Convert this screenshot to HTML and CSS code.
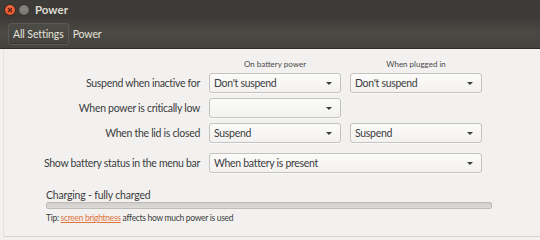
FILE: index.html
```html
<!DOCTYPE html>
<html>
<head>
<meta charset="utf-8">
<link rel="stylesheet" href="styles.css">
</head>
<body>
<div class="window">
  <div class="titlebar">
    <span class="btn close"><svg width="8" height="8" viewBox="0 0 8 8"><path d="M2 2L6 6M6 2L2 6" stroke="#5a1a0a" stroke-width="1.3"/></svg></span>
    <span class="btn min"></span>
    <span class="title">Power</span>
  </div>
  <div class="toolbar">
    <span class="crumb active">All Settings</span>
    <span class="crumb">Power</span>
  </div>
  <div class="content">
    <div class="grid">
      <div></div>
      <div class="colhead">On battery power</div>
      <div class="colhead">When plugged in</div>

      <div class="label">Suspend when inactive for</div>
      <div class="combo"><span>Don't suspend</span><i class="arrow"></i></div>
      <div class="combo"><span>Don't suspend</span><i class="arrow"></i></div>

      <div class="label">When power is critically low</div>
      <div class="combo"><span></span><i class="arrow"></i></div>
      <div></div>

      <div class="label">When the lid is closed</div>
      <div class="combo"><span>Suspend</span><i class="arrow"></i></div>
      <div class="combo"><span>Suspend</span><i class="arrow"></i></div>

      <div class="label spaced">Show battery status in the menu bar</div>
      <div class="combo wide spaced"><span>When battery is present</span><i class="arrow"></i></div>
    </div>
    <div class="status">
      <div class="charging">Charging - fully charged</div>
      <div class="bar"></div>
      <div class="tip">Tip: <a class="link">screen brightness</a> affects how much power is used</div>
    </div>
  </div>
</div>
</body>
</html>
```
FILE: styles.css
```css
html, body { margin: 0; padding: 0; }
body {
  width: 540px; height: 240px; overflow: hidden;
  background: #f2f1f0;
  font-family: Lato, "Open Sans", sans-serif;
}
.window { display: flex; flex-direction: column; height: 240px; }
.titlebar {
  height: 19px; display: flex; align-items: center;
  background: linear-gradient(#3d3c38, #3b3a36);
  padding-left: 5px; gap: 2px;
}
.btn { width: 10px; height: 10px; border-radius: 50%; display: flex; align-items: center; justify-content: center; }
.close { background: radial-gradient(circle at 50% 40%, #f4774f, #e0461c); box-shadow: 0 0 0 1px #3a2a22; }
.min { background: radial-gradient(circle at 50% 40%, #8a8882, #6b6964); margin-left: 2px; box-shadow: 0 0 0 1px #33322f; }
.title { color: #dfdbd2; font-weight: bold; font-size: 11.5px; margin-left: 4px; }
.toolbar {
  height: 29px; display: flex; align-items: center;
  background: linear-gradient(#3f3e3a, #4a4944 50%, #44433e);
  padding-left: 8px; border-bottom: 1px solid #2e2d2a;
}
.crumb { color: #e6e3dc; font-size: 10.5px; padding: 4px 4px; letter-spacing: -0.1px; }
.crumb.active {
  border: 1px solid #5a5954; border-radius: 3px;
  background: linear-gradient(#4c4b46, #44433f);
  box-shadow: inset 0 -1px 0 #383733;
  padding: 4px 4px;
}
.content {
  flex: 1; display: flex; flex-direction: column;
  border-left: 1px solid #e4e3e0; margin-left: 3px;
  border-bottom: 1px solid #d6d5d2; margin-bottom: 3px;
}
.grid {
  display: grid;
  grid-template-columns: 196px 132px 132px;
  column-gap: 9px;
  row-gap: 5px;
  margin-top: 10px;
  font-size: 10.5px; color: #3c3c3c; letter-spacing: -0.3px;
}
.colhead { font-size: 8px; text-align: center; color: #4a4a4a; margin-bottom: -1px; letter-spacing: 0; }
.label { text-align: right; align-self: center; }
.spaced { margin-top: 5px; }
.combo {
  height: 20px; box-sizing: border-box;
  border: 1px solid #c4c3bf; border-radius: 3px;
  background: linear-gradient(#fbfbfa, #f3f2f0);
  box-shadow: 0 1px 0 rgba(255,255,255,0.7);
  display: flex; align-items: center; justify-content: space-between;
  padding: 0 8px 0 4px; color: #3c3c3c;
}
.combo.wide { grid-column: 2 / span 2; }
.arrow {
  width: 0; height: 0;
  border-left: 3px solid transparent; border-right: 3px solid transparent;
  border-top: 3px solid #3c3c3c;
}
.status { margin-left: 42px; margin-top: 16px; width: 446px; }
.charging { font-size: 10.5px; color: #3c3c3c; letter-spacing: -0.2px; }
.bar {
  height: 5px; margin-top: 1px;
  border: 1px solid #bdbcb8; border-radius: 2px;
  background: linear-gradient(#d0cfcb, #dcdbd8);
}
.tip { font-size: 8.5px; color: #3c3c3c; margin-top: 4px; letter-spacing: -0.3px; }
.link { color: #e0743c; text-decoration: underline; }
```
